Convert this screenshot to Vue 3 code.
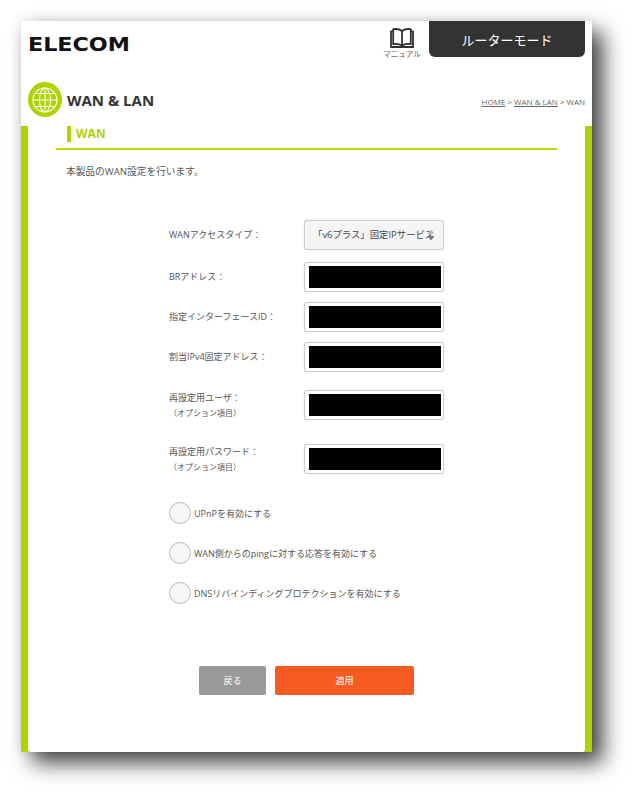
<template>
  <div class="stage">
    <div class="page">
      <div class="header">
        <div class="logo">ELECOM</div>
        <div class="manual">
          <svg class="book" width="24" height="20" viewBox="0 0 24 20" fill="none" stroke="#333" stroke-width="1.8">
            <path d="M12 3C10 1.2 6 .8 3.2 1.2V16C6 15.6 10 16 12 17.5C14 16 18 15.6 20.8 16V1.2C18 .8 14 1.2 12 3Z" />
            <path d="M12 3V17.5" />
            <path d="M3.2 3.5H1V19H23V3.5H20.8" />
          </svg>
          <span>マニュアル</span>
        </div>
        <div class="mode">ルーターモード</div>
      </div>

      <div class="title-row">
        <div class="title-left">
          <div class="globe">
            <svg width="26" height="26" viewBox="0 0 26 26" fill="none" stroke="#fff" stroke-width="1.1">
              <circle cx="13" cy="13" r="12" />
              <ellipse cx="13" cy="13" rx="5.5" ry="12" />
              <path d="M13 1V25M1 13H25M3 6.5H23M3 19.5H23" />
            </svg>
          </div>
          <h1>WAN &amp; LAN</h1>
        </div>
        <div class="crumbs"><u>HOME</u> &gt; <u>WAN &amp; LAN</u> &gt; WAN</div>
      </div>

      <div class="body">
        <div class="content">
          <div class="section-head"><h2>WAN</h2></div>
          <p class="intro">本製品のWAN設定を行います。</p>

          <div class="form">
            <div class="row row-first">
              <div class="label">WANアクセスタイプ：</div>
              <div class="select">
                <span>「v6プラス」固定IPサービス</span>
                <svg class="arrows" width="8" height="12" viewBox="0 0 8 12">
                  <path d="M4 0.5L7.5 5H0.5Z" fill="#bbb" />
                  <path d="M4 11.5L7.5 7H0.5Z" fill="#777" />
                </svg>
              </div>
            </div>
            <div v-for="field in fields" :key="field" class="row">
              <div class="label">{{ field }}</div>
              <div class="input"><div class="mask"></div></div>
            </div>
            <div v-for="field in optionFields" :key="field" class="row row-option">
              <div class="label">
                {{ field }}
                <small>（オプション項目）</small>
              </div>
              <div class="input"><div class="mask"></div></div>
            </div>
          </div>

          <div class="checks">
            <div v-for="check in checks" :key="check" class="check">
              <span class="circle"></span>
              <span>{{ check }}</span>
            </div>
          </div>

          <div class="buttons">
            <button class="back">戻る</button>
            <button class="apply">適用</button>
          </div>
        </div>
      </div>
    </div>
  </div>
</template>

<script setup>
const fields = ['BRアドレス：', '指定インターフェースID：', '割当IPv4固定アドレス：']
const optionFields = ['再設定用ユーザ：', '再設定用パスワード：']
const checks = [
  'UPnPを有効にする',
  'WAN側からのpingに対する応答を有効にする',
  'DNSリバインディングプロテクションを有効にする',
]
</script>

<style>
html,
body {
  background: #fff;
}
</style>

<style scoped>
.stage {
  box-sizing: border-box;
  height: 794px;
  padding: 21px 42px 42px 21px;
  overflow: hidden;
}
.page {
  height: 731px;
  background: #fff;
  display: flex;
  flex-direction: column;
  font-family: "Open Sans", "Noto Sans CJK JP", sans-serif;
  color: #555;
  box-shadow: 11px 11px 20px rgba(0, 0, 0, 0.72), 0 0 12px rgba(0, 0, 0, 0.1);
}
.header {
  height: 61px;
  display: flex;
  align-items: flex-start;
  flex-shrink: 0;
}
.logo {
  margin: 11px 0 0 7px;
  font-family: "DejaVu Sans", sans-serif;
  font-weight: 700;
  font-size: 19px;
  line-height: 24px;
  color: #111;
  transform: scaleX(1.17);
  transform-origin: left;
}
.manual {
  margin: 7px 0 0 auto;
  width: 46px;
  display: flex;
  flex-direction: column;
  align-items: center;
  font-size: 7.5px;
  line-height: 10px;
  color: #666;
}
.book {
  margin-bottom: 1px;
}
.mode {
  margin: 0 7px 0 4px;
  width: 156px;
  height: 36px;
  background: #333;
  border-radius: 0 0 6px 6px;
  color: #fff;
  font-size: 13px;
  line-height: 38px;
  text-align: center;
}
.title-row {
  height: 44px;
  flex-shrink: 0;
  display: flex;
  align-items: center;
  justify-content: space-between;
  padding: 0 7px;
}
.title-left {
  display: flex;
  align-items: center;
  gap: 5px;
  margin-top: -9px;
}
.globe {
  width: 34px;
  height: 35px;
  border-radius: 50%;
  background: #aed400;
  display: flex;
  align-items: center;
  justify-content: center;
}
h1 {
  margin: 0;
  font-size: 15px;
  line-height: 20px;
  font-weight: 700;
  color: #333;
}
.crumbs {
  margin-top: -5px;
  font-size: 8px;
  color: #666;
}
.body {
  flex: 1;
  display: flex;
  padding: 0 7px;
  background: #aed400;
}
.content {
  flex: 1;
  padding: 0 28px;
  background: #fff;
  border-radius: 0 0 3px 3px;
}
.section-head {
  height: 22px;
  border-bottom: 2px solid #bedc00;
  padding: 0 0 0 11px;
  display: flex;
  align-items: flex-start;
}
h2 {
  margin: 0;
  padding-left: 5px;
  border-left: 4px solid #aed400;
  font-size: 12px;
  line-height: 16px;
  font-weight: 700;
  color: #aed400;
}
.intro {
  margin: 15px 0 0 10px;
  font-size: 9.7px;
  line-height: 14px;
  color: #555;
}
.form {
  margin-top: 41px;
  margin-left: 113px;
  display: flex;
  flex-direction: column;
  gap: 10px;
}
.row {
  display: flex;
  align-items: center;
  height: 30px;
}
.row-first {
  margin-bottom: 2px;
}
.row-option {
  margin-top: 8px;
  align-items: flex-start;
}
.row-option + .row-option {
  margin-top: 14px;
}
.label {
  width: 135px;
  font-size: 9px;
  line-height: 14px;
}
.row-option .label {
  line-height: 15px;
}
.label small {
  display: block;
  font-size: 8px;
}
.select,
.input {
  box-sizing: border-box;
  width: 140px;
  height: 30px;
  border: 1px solid #ccc;
  border-radius: 3px;
  box-shadow: 0 0 1px rgba(0, 0, 0, 0.2);
  background: #fff;
}
.select {
  background: #f5f5f5;
  position: relative;
  padding-left: 8px;
  font-size: 9.4px;
  line-height: 27px;
  color: #444;
  white-space: nowrap;
  overflow: hidden;
}
.arrows {
  position: absolute;
  right: 8px;
  top: 8px;
}
.input {
  padding: 3px 2px 3px 4px;
}
.mask {
  height: 100%;
  background: #000;
}
.checks {
  margin: 28px 0 0 113px;
  display: flex;
  flex-direction: column;
  gap: 18px;
}
.check {
  display: flex;
  align-items: center;
  gap: 3px;
  height: 22px;
  font-size: 9px;
  color: #555;
}
.circle {
  box-sizing: border-box;
  width: 22px;
  height: 22px;
  border: 1px solid #bbb;
  border-radius: 50%;
  background: #f6f6f6;
}
.buttons {
  margin: 62px 0 0 143px;
  display: flex;
  gap: 9px;
}
button {
  height: 29px;
  border: none;
  border-radius: 2px;
  color: #fff;
  font-family: inherit;
  font-size: 9px;
}
.back {
  width: 67px;
  background: #999;
}
.apply {
  width: 139px;
  background: #f55b23;
}
</style>
